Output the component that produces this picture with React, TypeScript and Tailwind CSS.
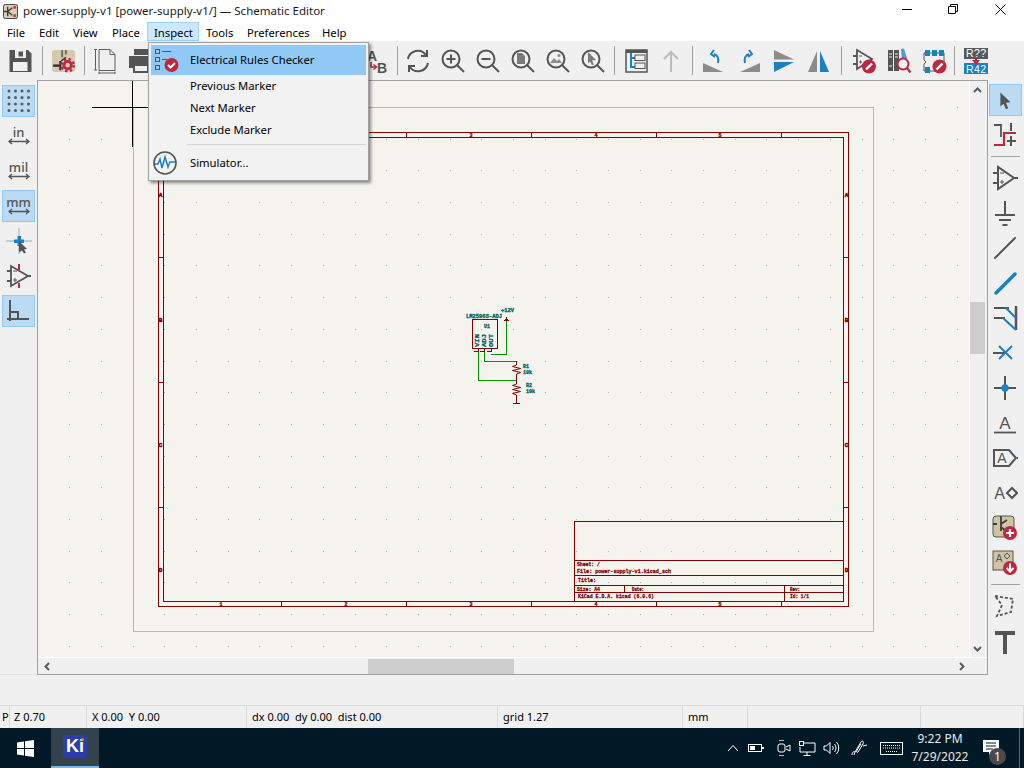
import React from 'react';

const DK = '#545454';
const BL = '#1a81c4';
const RD = '#bf2641';
const MAROON = '#840000';
const TEAL = '#006464';

const Ic: React.FC<{ children: React.ReactNode; s?: number }> = ({ children, s = 26 }) => (
  <svg width={s} height={s} viewBox="0 0 26 26" fill="none">
    {children}
  </svg>
);

const Slot: React.FC<{ children?: React.ReactNode }> = ({ children }) => (
  <div className="w-[35px] h-[39px] flex items-center justify-center shrink-0">{children}</div>
);

const Sep: React.FC<{ className: string }> = ({ className }) => (
  <div className={`${className} h-[39px] flex items-center justify-center shrink-0`}>
    <div className="w-px h-[29px] bg-[#a0a0a0]" />
  </div>
);

const Side: React.FC<{ children: React.ReactNode; on?: boolean }> = ({ children, on }) => (
  <div className="h-[35px] flex items-center justify-center">
    <div
      className={
        on
          ? 'w-[33px] h-[32px] flex items-center justify-center bg-[#bbdaf3] border border-[#90c8f6]'
          : 'w-[33px] h-[32px] flex items-center justify-center'
      }
    >
      {children}
    </div>
  </div>
);

const Magnifier: React.FC<{ children?: React.ReactNode }> = ({ children }) => (
  <Ic>
    <circle cx="11" cy="11" r="8.5" stroke={DK} strokeWidth="2" />
    <path d="M17 17l7 7" stroke={DK} strokeWidth="2" />
    {children}
  </Ic>
);

const RedBadge: React.FC<{ cx: number; cy: number; r?: number }> = ({ cx, cy, r = 6 }) => (
  <>
    <circle cx={cx} cy={cy} r={r} fill={RD} />
    <path d={`M${cx - 3} ${cy + 3}l6 -6`} stroke="#fff" strokeWidth="2.400" />
  </>
);

function TopBar() {
  return (
    <div className="h-[39px] bg-[#f0f0f0] flex items-center pl-[3px] shrink-0">
      <Slot>
        <Ic>
          <path d="M1.500 2H20l3.500 3.500V24H1.500z" fill={DK} />
          <rect x="7" y="2" width="11" height="8" fill="#f0f0f0" />
          <rect x="10.500" y="3.500" width="4.500" height="5" fill={DK} />
          <rect x="5" y="14" width="14.500" height="9" fill="#f0f0f0" />
        </Ic>
      </Slot>
      <Sep className="w-[8px]" />
      <Slot>
        <Ic s={24}>
          <rect x="0" y="1" width="25" height="24" rx="3" fill="#d4c9ad" />
          <path d="M11 1v8M1 18h8M15 1v5" stroke="#6a6a62" strokeWidth="2" />
          <path d="M9 13v10M1.500 18h6" stroke="#2e2e2e" strokeWidth="2.200" />
          <path d="M10 13l5 -4" stroke="#2e2e2e" strokeWidth="1.600" />
          <circle cx="17" cy="17.500" r="6.600" stroke={RD} strokeWidth="2.600" strokeDasharray="2.600 2.600" />
          <circle cx="17" cy="17.500" r="4" stroke={RD} strokeWidth="3" />
        </Ic>
      </Slot>
      <Sep className="w-[7px]" />
      <Slot>
        <Ic>
          <path d="M6 1.500h11l5 5v16H6z" stroke="#5e5e5e" />
          <path d="M17 1.500v5h5M2.500 1v21M1 1.500h3M1 22h3M6 25h16M6 23.500v3M22 23.500v3" stroke="#5e5e5e" />
        </Ic>
      </Slot>
      <Slot>
        <Ic>
          <rect x="6" y="1" width="15" height="6" fill={DK} />
          <path d="M1 8h24v12h-4v-4H5v4H1z" fill={DK} />
          <rect x="6" y="17" width="14" height="7" stroke={DK} strokeWidth="2" />
        </Ic>
      </Slot>
      <div className="w-[201px] shrink-0" />
      <Slot>
        <Ic>
          <text x="3" y="13" fontFamily="'Liberation Sans', sans-serif" fontWeight="700" fontSize="14" fill={DK}>A</text>
          <text x="13" y="24.500" fontFamily="'Liberation Sans', sans-serif" fontWeight="700" fontSize="14" fill={DK}>B</text>
          <path d="M7 14v5h5M9.500 16.500l3 2.500 -3 2.500" stroke={RD} strokeWidth="1.500" />
        </Ic>
      </Slot>
      <Sep className="w-[6px]" />
      <Slot>
        <Ic>
          <path d="M3 11a10 10 0 0 1 18 -4M23 15a10 10 0 0 1 -18 4" stroke={DK} strokeWidth="2" />
          <path d="M22 2v6h-6M4 24v-6h6" stroke={DK} strokeWidth="2" />
        </Ic>
      </Slot>
      <Slot>
        <Magnifier>
          <path d="M11 6.500v9M6.500 11h9" stroke={DK} strokeWidth="2" />
        </Magnifier>
      </Slot>
      <Slot>
        <Magnifier>
          <path d="M6.500 11h9" stroke={DK} strokeWidth="2" />
        </Magnifier>
      </Slot>
      <Slot>
        <Magnifier>
          <path d="M7 5h5l3 3v8H7z" fill="#7a7a7a" />
        </Magnifier>
      </Slot>
      <Slot>
        <Magnifier>
          <path d="M5 15l4 -5 3 3 2 -2 3 4z" fill="#8c8c8c" />
          <circle cx="14" cy="7.500" r="1.500" fill="#8c8c8c" />
        </Magnifier>
      </Slot>
      <Slot>
        <Magnifier>
          <path d="M8 4l8 8 -4 .5 2 4 -2 .5 -2 -3.500 -2 2z" fill="#7a7a7a" />
        </Magnifier>
      </Slot>
      <Sep className="w-[8px]" />
      <Slot>
        <Ic>
          <rect x="3" y="2" width="21" height="22" stroke={DK} strokeWidth="1.500" />
          <rect x="3" y="2" width="21" height="3" fill={DK} />
          <path d="M8 5v14h4M8 10h4" stroke={BL} strokeWidth="2" />
          <rect x="12" y="7" width="10" height="5.500" stroke={DK} />
          <rect x="12" y="15" width="10" height="5.500" stroke={DK} />
        </Ic>
      </Slot>
      <Slot>
        <Ic>
          <path d="M13 24V4M6 11l7 -7 7 7" stroke="#bcbcbc" strokeWidth="2" />
        </Ic>
      </Slot>
      <Sep className="w-[8px]" />
      <Slot>
        <Ic>
          <path d="M2 24v-9l20 9z" fill="#8c8c8c" />
          <path d="M17 15c1 -4 0 -8 -4 -9M13 2l-3 4 4 3" stroke={BL} strokeWidth="2" />
        </Ic>
      </Slot>
      <Slot>
        <Ic>
          <path d="M24 24v-9L4 24z" fill="#8c8c8c" />
          <path d="M9 15c-1 -4 0 -8 4 -9M13 2l3 4 -4 3" stroke={BL} strokeWidth="2" />
        </Ic>
      </Slot>
      <Slot>
        <Ic>
          <path d="M3 2l20 9.500H3z" fill="#8c8c8c" />
          <path d="M3 14h20L3 24z" fill={BL} />
        </Ic>
      </Slot>
      <Slot>
        <Ic>
          <path d="M11 3v21H2z" fill="#8c8c8c" />
          <path d="M14 3v21h9z" fill={BL} />
        </Ic>
      </Slot>
      <Sep className="w-[10px]" />
      <Slot>
        <Ic>
          <path d="M6 2v19l15 -10z" stroke={DK} strokeWidth="1.800" />
          <path d="M2 8h4M2 16h4" stroke={DK} strokeWidth="1.800" />
          <path d="M8 8h3M8 14h3M9.500 12.500v3" stroke={DK} />
          <RedBadge cx={18} cy={18.500} r={7} />
        </Ic>
      </Slot>
      <Slot>
        <Ic>
          <rect x="2" y="2" width="5" height="21" fill={DK} />
          <rect x="8" y="2" width="5" height="21" fill={DK} />
          <path d="M15 1l3 -.5 4 13h-6z" fill={BL} opacity="0.75" />
          <path d="M3 6h3M9 6h3M3 9h3M9 9h3M3 18h3" stroke="#f0f0f0" />
          <circle cx="17" cy="16" r="5.500" stroke={RD} strokeWidth="2" fill="#f4f4f4" />
          <path d="M21 20l3.500 4.500" stroke={RD} strokeWidth="2.200" />
        </Ic>
      </Slot>
      <Slot>
        <Ic>
          <path d="M3 5h20v18H3V16l2 -2 -2 -2z" stroke={DK} />
          <path d="M4 2h5v6H4zM11 2h5v6h-5zM18 2h5v6h-5zM4 19h5v6H4z" fill={BL} />
          <RedBadge cx={18.500} cy={18.500} r={7} />
        </Ic>
      </Slot>
      <Sep className="w-[7px]" />
      <Slot>
        <svg width="26" height="28" viewBox="0 0 26 28" fill="none">
          <rect x="1" y="1" width="24" height="11" fill="#5a5a5a" />
          <rect x="1" y="16" width="24" height="11" fill={BL} />
          <text x="3" y="10" fontFamily="'Liberation Sans', sans-serif" fontSize="10.500" fill="#fff" textLength="20">R??</text>
          <text x="3" y="25.500" fontFamily="'Liberation Sans', sans-serif" fontSize="10.500" fill="#fff" textLength="20">R42</text>
          <path d="M13 10v4" stroke={RD} strokeWidth="2" />
          <path d="M9 13h8l-4 5z" fill={RD} />
        </svg>
      </Slot>
    </div>
  );
}

function LeftBar() {
  const dots = [];
  for (let y = 0; y < 4; y++) for (let x = 0; x < 4; x++) dots.push(<circle key={x + '-' + y} cx={3 + x * 6.500} cy={3 + y * 6.500} r="1.500" fill="#5a5a5a" />);
  const unit = (t: string) => (
    <div className="flex flex-col items-center text-[#545454] leading-none">
      <span className="text-[13px] font-medium leading-[12px]">{t}</span>
      <svg width="22" height="7" viewBox="0 0 22 7" fill="none">
        <path d="M1 3.500h20M4 1L1 3.500 4 6M18 1l3 2.500L18 6" stroke={DK} strokeWidth="1.400" />
      </svg>
    </div>
  );
  return (
    <div className="w-[37px] bg-[#f0f0f0] pt-[3px] border-b border-[#e2e2e2] shrink-0">
      <Side on>
        <Ic>{dots}</Ic>
      </Side>
      <Side>{unit('in')}</Side>
      <Side>{unit('mil')}</Side>
      <Side on>{unit('mm')}</Side>
      <Side>
        <Ic>
          <path d="M13 0v26M0 13h26" stroke="#a8a8a8" />
          <rect x="8" y="11.500" width="10" height="3.500" fill={BL} />
          <rect x="11.500" y="8" width="3.500" height="10" fill={BL} />
          <path d="M13 13l8 8 -3 .5 2 3 -2 1 -2 -3 -3 2z" fill={DK} />
        </Ic>
      </Side>
      <Side>
        <Ic>
          <path d="M5 3v20l17 -10z" stroke={DK} strokeWidth="1.800" />
          <path d="M1 8h4M1 18h4M22 13h3" stroke={DK} strokeWidth="1.800" />
          <path d="M7 8h4M7 17h4M9 15v4" stroke={DK} />
          <path d="M13 1v6M13 20v5" stroke={RD} strokeWidth="2" />
        </Ic>
      </Side>
      <Side on>
        <Ic>
          <path d="M4 2v21M1 21h22M4 14h8v7" stroke={DK} strokeWidth="2" />
        </Ic>
      </Side>
    </div>
  );
}

function RightBar() {
  const sep = (
    <div className="h-[8px] flex items-center justify-center">
      <div className="w-[29px] h-px bg-[#a0a0a0]" />
    </div>
  );
  return (
    <div className="w-[36px] bg-[#f0f0f0] pt-[2px] pr-[2px] shrink-0">
      <Side on>
        <Ic s={24}>
          <path d="M8 5l11 10.500 -5 .5 2.500 6 -2.500 1 -2.500 -6 -3.500 3z" fill={DK} />
        </Ic>
      </Side>
      <Side>
        <Ic>
          <path d="M2 3h7v12" stroke={DK} strokeWidth="1.800" />
          <path d="M2 23h10V11h12" stroke={RD} strokeWidth="2.200" />
          <path d="M19 1v8M19 14v10M15 19h9" stroke={DK} strokeWidth="2" />
        </Ic>
      </Side>
      {sep}
      <Side>
        <Ic>
          <path d="M6 2v22l16 -11z" stroke={DK} strokeWidth="2" />
          <path d="M1 8h5M1 18h5M22 13h4" stroke={DK} strokeWidth="2" />
          <path d="M8 8h4M8 17h4M10 15v4" stroke={DK} />
        </Ic>
      </Side>
      <Side>
        <Ic>
          <path d="M13 1v14M3 15h20M7 20h12M10.500 25h5" stroke={DK} strokeWidth="2" />
        </Ic>
      </Side>
      <Side>
        <Ic>
          <path d="M3 23L23 3" stroke={DK} strokeWidth="2" strokeLinecap="round" />
        </Ic>
      </Side>
      <Side>
        <Ic>
          <path d="M4 23L23 4" stroke={BL} strokeWidth="3.500" strokeLinecap="round" />
        </Ic>
      </Side>
      <Side>
        <Ic>
          <path d="M24 1v24" stroke={DK} strokeWidth="2.500" />
          <path d="M2 3h15M2 13h11" stroke={DK} strokeWidth="2" />
          <path d="M14 3l10 10M11 13l13 12" stroke={BL} strokeWidth="2" />
        </Ic>
      </Side>
      <Side>
        <Ic>
          <path d="M1 13h12" stroke={DK} strokeWidth="2" />
          <path d="M7 6l13 13M20 6L7 19" stroke={BL} strokeWidth="2" />
        </Ic>
      </Side>
      <Side>
        <Ic>
          <path d="M13 1v24M2 13h22" stroke={DK} strokeWidth="2" />
          <circle cx="13" cy="13" r="3.700" fill={BL} />
        </Ic>
      </Side>
      <Side>
        <Ic>
          <text x="13" y="19" textAnchor="middle" fontFamily="'Liberation Sans', sans-serif" fontSize="17" fill={DK}>A</text>
          <path d="M2 22.500h22" stroke={DK} strokeWidth="1.800" />
        </Ic>
      </Side>
      <Side>
        <Ic>
          <path d="M2 5h15l7 8 -7 8H2z" stroke={DK} strokeWidth="2" />
          <text x="10" y="18" textAnchor="middle" fontFamily="'Liberation Sans', sans-serif" fontSize="14" fill={DK}>A</text>
          <path d="M23 13h3" stroke={BL} strokeWidth="2" />
        </Ic>
      </Side>
      <Side>
        <Ic>
          <text x="7.500" y="19" textAnchor="middle" fontFamily="'Liberation Sans', sans-serif" fontSize="16" fill={DK}>A</text>
          <path d="M20 8l5 5 -5 5 -5 -5z" stroke={DK} strokeWidth="2" />
        </Ic>
      </Side>
      <Side>
        <Ic>
          <rect x="1" y="1" width="21" height="21" rx="3" fill="#cfc4a6" stroke={DK} />
          <path d="M9 1v7M1 9h4M9 6v10M9 9l6 -4M9 12l5 4" stroke="#3c3c3c" strokeWidth="1.800" />
          <circle cx="18" cy="18" r="7" fill={RD} />
          <path d="M14 18h8M18 14v8" stroke="#fff" strokeWidth="2.200" />
        </Ic>
      </Side>
      <Side>
        <Ic>
          <rect x="1" y="1" width="20" height="19" fill="#cfc4a6" stroke={DK} />
          <text x="7" y="12" textAnchor="middle" fontFamily="'Liberation Sans', sans-serif" fontSize="10" fill={DK}>A</text>
          <path d="M15 3l3 3 -3 3 -3 -3z" stroke={DK} />
          <circle cx="18" cy="18" r="7" fill={RD} />
          <path d="M18 13.500v8M14.500 18l3.500 3.500 3.500 -3.500" stroke="#fff" strokeWidth="2" />
        </Ic>
      </Side>
      {sep}
      <Side>
        <Ic>
          <path d="M3 3l18 3 -2 13 -14 4 5 -11z" stroke={DK} strokeWidth="1.800" strokeDasharray="3 2" />
        </Ic>
      </Side>
      <Side>
        <Ic>
          <path d="M3 3h20v4H15v19h-4V7H3z" fill={DK} />
        </Ic>
      </Side>
    </div>
  );
}

function Schematic() {
  const xs = Array.from({ length: 30 }, (_, i) => 69.3 + i * 31.69);
  const ys = Array.from({ length: 18 }, (_, i) => 107 + i * 31.69);
  const mono = "'Liberation Mono', monospace";
  const tb = (t: string, x: number, y: number, w: number) => (
    <text x={x} y={y} fontFamily={mono} fontWeight="700" fontSize="6" fill={MAROON} stroke={MAROON} strokeWidth="0.300" textLength={w} lengthAdjust="spacingAndGlyphs">
      {t}
    </text>
  );
  const tl = (t: string, x: number, y: number, w: number) => (
    <text x={x} y={y} fontFamily={mono} fontWeight="700" fontSize="6" fill={TEAL} stroke={TEAL} strokeWidth="0.350" textLength={w} lengthAdjust="spacingAndGlyphs">
      {t}
    </text>
  );
  const pin = (t: string, x: number) => (
    <text transform={`translate(${x} 347) rotate(-90)`} fontFamily={mono} fontWeight="700" fontSize="6" fill={TEAL} stroke={TEAL} strokeWidth="0.300" textLength={13} lengthAdjust="spacingAndGlyphs">
      {t}
    </text>
  );
  const digits = [221, 346, 471, 596, 720];
  const letters = [195, 320, 445, 570];
  return (
    <svg width="932" height="576" viewBox="38 81 932 576" className="block" shapeRendering="crispEdges">
      {xs.map((x) =>
        ys.map((y) => <rect key={x + '_' + y} x={Math.round(x)} y={Math.round(y)} width="1" height="1" fill="#b0b0a8" />)
      )}
      <rect x="133.500" y="107.500" width="740" height="524" fill="none" stroke="#b8b8b4" />
      <path d="M92 107.500h80M132.500 81v66" stroke="#000" fill="none" />
      <g fill="none" stroke={MAROON}>
        <rect x="158.500" y="132.500" width="690" height="474" />
        <rect x="163.500" y="137.500" width="680" height="464" />
        {[281, 406, 531, 656, 781].map((x) => (
          <path key={x} d={`M${x}.5 132v5M${x}.5 601v5`} />
        ))}
        {[257, 382, 507].map((y) => (
          <path key={y} d={`M158 ${y}.5h5M844 ${y}.5h5`} />
        ))}
        <rect x="574.500" y="521.500" width="269" height="80" />
        <path d="M574 560.500h270M574 575.500h270M574 585.500h270M574 592.500h270M624.500 585v7M784.500 585v16" />
      </g>
      {digits.map((x, i) => (
        <g key={x} fontFamily={mono} fontWeight="700" fontSize="5" fill={MAROON} stroke={MAROON} strokeWidth="0.300" textAnchor="middle">
          {/* the first two top digits sit under the open menu */}
          {i >= 2 && <text x={x} y="137">{i + 1}</text>}
          <text x={x} y="606">{i + 1}</text>
        </g>
      ))}
      {letters.map((y, i) => (
        <g key={y} fontFamily={mono} fontWeight="700" fontSize="6" fill={MAROON} stroke={MAROON} strokeWidth="0.500" textAnchor="middle">
          <text x="160.500" y={y + 2}>{'ABCD'[i]}</text>
          <text x="846.500" y={y + 2}>{'ABCD'[i]}</text>
        </g>
      ))}
      {tb('Sheet: /', 577, 566, 23)}
      {tb('File: power-supply-v1.kicad_sch', 577, 573, 94)}
      {tb('Title:', 578, 582, 18)}
      {tb('Size: A4', 577, 591, 23)}
      {tb('Date:', 632, 591, 12)}
      {tb('Rev:', 790, 591, 10)}
      {tb('KiCad E.D.A.  kicad (6.0.6)', 578, 598, 76)}
      {tb('Id: 1/1', 790, 598, 19)}

      <g fill="none">
        <path d="M491 354.500h15.500V320M484.500 351v10.500H516.500M478.500 351v29.500H516.500" stroke="#009600" />
        <rect x="472.500" y="319.500" width="25" height="29" stroke={MAROON} />
        <path d="M478.500 349v3M484.500 349v3M491.500 349v3M474 351.500h4M480 351.500h4M487 351.500h4" stroke={MAROON} strokeWidth="1.500" />
        <path d="M516.500 361v4l-4 1.500 8 2 -8 2 8 2 -4 1.500V380M516.500 380v4l-4 1.500 8 2 -8 2 8 2 -8 2 4 1.500V403" stroke={MAROON} shapeRendering="auto" />
        <path d="M513 403.500h7M506.500 317v3" stroke={MAROON} />
        <path d="M506.500 317l-2.500 4h5z" fill={MAROON} />
      </g>
      {tl('LM2596S-ADJ', 466, 318, 36)}
      {tl('+12V', 501, 312, 13)}
      {tl('U1', 484, 328, 6)}
      {tl('R1', 523, 368, 6)}
      {tl('10k', 523, 374, 9)}
      {tl('R2', 526, 387, 6)}
      {tl('10k', 526, 393, 9)}
      {pin('VIN', 479)}
      {pin('ADJ', 486)}
      {pin('OUT', 493)}
    </svg>
  );
}

function Canvas() {
  const chev = (d: string) => (
    <svg width="9" height="9" viewBox="0 0 9 9" fill="none">
      <path d={d} stroke="#5a5a5a" strokeWidth="2" />
    </svg>
  );
  return (
    <div className="w-[951px] border-t border-l border-b border-r border-[#a0a0a0] bg-[#f0f0f0] flex flex-col shrink-0">
      <div className="flex h-[576px] shrink-0">
        <div className="w-[931px] h-[576px] bg-[#f4f3ee] overflow-hidden shrink-0">
          <Schematic />
        </div>
        <div className="w-[18px] flex flex-col pt-[5px] border-l border-white">
          <div className="pl-[3px]">{chev('M1 6l3.500 -3.500L8 6')}</div>
          <div className="h-[207px] shrink-0" />
          <div className="w-[15px] h-[52px] bg-[#cdcdcd] shrink-0" />
          <div className="flex-1" />
          <div className="pl-[3px]">{chev('M1 3l3.500 3.500L8 3')}</div>
          <div className="h-[4px] shrink-0" />
        </div>
      </div>
      <div className="h-[17px] flex items-center pl-[5px] border-t border-white">
        {chev('M6 1L2.500 4.500 6 8')}
        <div className="w-[316px] shrink-0" />
        <div className="w-[146px] h-[15px] bg-[#cdcdcd] shrink-0" />
        <div className="w-[443px] shrink-0" />
        {chev('M3 1l3.500 3.500L3 8')}
      </div>
    </div>
  );
}

function StatusBar() {
  const cells: [string, string][] = [
    ['w-[10px] pl-[2px]', 'P'],
    ['w-[77px] pl-[4px]', 'Z 0.70'],
    ['w-[160px] pl-[5px]', 'X 0.00  Y 0.00'],
    ['w-[251px] pl-[5px]', 'dx 0.00  dy 0.00  dist 0.00'],
    ['w-[185px] pl-[5px]', 'grid 1.27'],
    ['w-[65px] pl-[5px]', 'mm'],
    ['w-[173px]', ''],
    ['flex-1', ''],
  ];
  return (
    <div className="h-[23px] bg-[#f0f0f0] border-t border-[#d9d9d9] flex shrink-0">
      {cells.map(([w, t], i) => (
        <div
          key={i}
          className={`${w} h-full shrink-0 border-r border-[#d9d9d9] text-[11px] leading-[22px] text-black whitespace-pre overflow-hidden`}
        >
          {t}
        </div>
      ))}
    </div>
  );
}

function Taskbar() {
  return (
    <div className="h-[40px] bg-[#011926] flex items-center relative shrink-0 text-white">
      <div className="w-[51px] flex justify-center">
        <svg width="17" height="17" viewBox="0 0 17 17" fill="#fff">
          <path d="M0 2.500L7 1.500V8H0zM8 1.300L17 0V8H8zM0 9h7v6.500L0 14.500zM8 9h9v8l-9 -1.300z" />
        </svg>
      </div>
      <div className="w-[48px] h-[40px] bg-[#33434e] border-b-2 border-[#76b9ed] flex items-center justify-center">
        <div className="relative w-[24px] h-[23px] bg-[#2c3dab] rounded-[4px] flex items-center justify-center mb-[2px]">
          <span className="font-['Liberation_Sans'] font-bold text-[18px] leading-none text-white">Ki</span>
          <span className="absolute right-[3px] top-[3px] w-[3px] h-[3px] rounded-full bg-[#f08020]" />
        </div>
      </div>
      <div className="flex-1" />
      <div className="flex items-center">
        <svg width="12" height="8" viewBox="0 0 12 8" fill="none" className="mr-[9px]">
          <path d="M1 7l5 -5.500L11 7" stroke="#fff" />
        </svg>
        <svg width="16" height="10" viewBox="0 0 16 10" fill="none" className="mr-[13px]">
          <rect x="0.500" y="1.500" width="13" height="7" stroke="#fff" />
          <rect x="2" y="3" width="5" height="4" fill="#fff" />
          <rect x="14" y="4" width="2" height="2" fill="#fff" />
        </svg>
        <svg width="14" height="18" viewBox="0 0 14 18" fill="none" className="mr-[8px]">
          <path d="M2 1.500h5M2 16.500h5" stroke="#fff" strokeOpacity="0.7" />
          <rect x="1" y="5" width="7" height="8" rx="2" stroke="#fff" />
          <path d="M9 8l4 -2v6l-4 -2" stroke="#fff" />
        </svg>
        <svg width="17" height="15" viewBox="0 0 17 15" fill="none" className="mr-[7px]">
          <path d="M4 2h12v9H1V6M8 11v3M4.500 14.500h7" stroke="#fff" />
          <rect x="0.500" y="0.500" width="4" height="4" stroke="#fff" />
        </svg>
        <svg width="17" height="14" viewBox="0 0 17 14" fill="none" className="mr-[11px]">
          <path d="M1 5h2.500L7 1.500v11L3.500 9H1z" stroke="#fff" />
          <path d="M9.500 5a3 3 0 0 1 0 4M11.500 3a6 6 0 0 1 0 8M13.500 1a9 9 0 0 1 0 12" stroke="#fff" />
        </svg>
        <svg width="17" height="16" viewBox="0 0 17 16" fill="none" className="mr-[12px]">
          <path d="M1 15c0 -3 2 -4 3 -3l-1 3M4 12L10 2c2 -2 3 0 2 2L7 12c-1 1 -2 0 -1 -2l4 -6M12 6l4 -1" stroke="#fff" />
        </svg>
        <svg width="23" height="13" viewBox="0 0 23 13" fill="none" className="mr-[8px]">
          <rect x="0.500" y="0.500" width="22" height="12" stroke="#fff" />
          <path d="M3 3.500h17M3 6h17M6 9.500h11" stroke="#fff" strokeDasharray="1 1" />
        </svg>
        <div className="w-[58px] text-center text-[12px] leading-[18px] text-[#e8e8e8]">
          <div>9:22 PM</div>
          <div>7/29/2022</div>
        </div>
        <div className="relative w-[50px] h-[40px] ml-[5px]">
          <svg width="16" height="15" viewBox="0 0 16 15" className="absolute left-[9px] top-[12px]">
            <path d="M0 0h16v12H9l-3 3v-3H0z" fill="#fff" />
            <path d="M3 3h10M3 6h10M3 9h7" stroke="#011926" />
          </svg>
          <div className="absolute left-[15px] top-[20px] w-[17px] h-[17px] rounded-full bg-[#4a4a4a] text-[12px] leading-[17px] text-center text-white">1</div>
        </div>
      </div>
      <div className="absolute right-[4px] top-0 w-px h-[40px] bg-[#5a6770]" />
    </div>
  );
}

const App: React.FC = () => {
  const menus: [string, string][] = [
    ['File', 'w-[32px]'],
    ['Edit', 'w-[34px]'],
    ['View', 'w-[39px]'],
    ['Place', 'w-[42px]'],
  ];
  const menus2: [string, string][] = [
    ['Tools', 'w-[41px]'],
    ['Preferences', 'w-[75px]'],
    ['Help', 'w-[39px]'],
  ];
  return (
    <div className="relative w-[1024px] h-[768px] overflow-hidden flex flex-col bg-white font-['Noto_Sans',sans-serif] text-[11.25px] text-black">
      {/* title bar */}
      <div className="h-[22px] flex items-center shrink-0">
        <svg width="15" height="15" viewBox="0 0 16 16" fill="none" className="ml-[3px] mt-[1px]">
          <rect x="0.500" y="0.500" width="15" height="15" rx="2" fill="#d8cfb4" stroke="#3c3c3c" />
          <path d="M5 3v10M5 8l5 -4M5 8l5 4M1 8h4" stroke="#3c3c3c" strokeWidth="1.500" />
          <rect x="11" y="2" width="3" height="3" fill="#e0305a" />
          <rect x="11" y="11" width="3" height="3" fill="#e0305a" />
        </svg>
        <span className="ml-[5px] text-[11.5px] text-[#1a1a1a]">power-supply-v1 [power-supply-v1/] — Schematic Editor</span>
        <div className="flex-1" />
        <div className="w-[46px] flex justify-center mb-[4px]">
          <svg width="10" height="10" viewBox="0 0 10 10" fill="none"><path d="M0 5.500h10" stroke="#000" /></svg>
        </div>
        <div className="w-[46px] flex justify-center mb-[4px]">
          <svg width="10" height="10" viewBox="0 0 10 10" fill="none"><path d="M.5 2.500h7v7h-7zM2.500 2.500v-2h7v7h-2" stroke="#000" /></svg>
        </div>
        <div className="w-[48px] flex justify-center mb-[4px]">
          <svg width="11" height="11" viewBox="0 0 11 11" fill="none"><path d="M.5 .5l10 10M10.500 .5l-10 10" stroke="#000" /></svg>
        </div>
      </div>
      {/* menu bar */}
      <div className="h-[19px] flex shrink-0">
        {menus.map(([t, w]) => (
          <div key={t} className={`${w} pl-[7px] leading-[21px]`}>{t}</div>
        ))}
        <div className="w-[52px] pl-[6px] leading-[19px] bg-[#cce8ff] border border-[#99d1ff]">Inspect</div>
        {menus2.map(([t, w]) => (
          <div key={t} className={`${w} pl-[7px] leading-[21px]`}>{t}</div>
        ))}
      </div>
      <TopBar />
      <div className="h-[595px] flex shrink-0">
        <LeftBar />
        <Canvas />
        <RightBar />
      </div>
      <div className="h-[30px] bg-[#f0f0f0] shrink-0" />
      <StatusBar />
      <Taskbar />

      {/* open Inspect menu */}
      <div className="absolute left-[148px] top-[42px] w-[221px] h-[139px] bg-[#f2f2f2] border border-[#a0a0a0] shadow-[2px_2px_3px_rgba(0,0,0,0.45)] p-[2px]">
        <div className="h-[30px] bg-[#90c8f6] flex items-center">
          <svg width="26" height="26" viewBox="0 0 26 26" fill="none" className="ml-[2px]">
            <rect x="2.500" y="2.500" width="4" height="4" stroke={DK} />
            <rect x="2.500" y="10.500" width="4" height="4" stroke={DK} />
            <rect x="2.500" y="18.500" width="4" height="4" stroke={DK} />
            <path d="M9 4.500h9M9 12.500h5" stroke={DK} />
            <circle cx="18.500" cy="18" r="7" fill={RD} />
            <path d="M15 18l2.500 2.500 4.500 -4.500" stroke="#fff" strokeWidth="2" />
          </svg>
          <span className="ml-[11px]">Electrical Rules Checker</span>
        </div>
        <div className="h-[22px] pl-[39px] leading-[21px]">Previous Marker</div>
        <div className="h-[22px] pl-[39px] leading-[21px]">Next Marker</div>
        <div className="h-[22px] pl-[39px] leading-[21px]">Exclude Marker</div>
        <div className="h-[7px] pl-[36px] flex items-center">
          <div className="w-full h-px bg-[#d4d4d4]" />
        </div>
        <div className="h-[30px] flex items-center">
          <svg width="26" height="26" viewBox="0 0 26 26" fill="none" className="ml-[1px]">
            <circle cx="13" cy="13" r="11" stroke={DK} strokeWidth="1.600" />
            <path d="M3 14h3l2 -5 2 9 3 -11 3 10 2 -5h5" stroke={BL} strokeWidth="1.500" />
          </svg>
          <span className="ml-[12px]">Simulator...</span>
        </div>
      </div>
    </div>
  );
};

export default App;
